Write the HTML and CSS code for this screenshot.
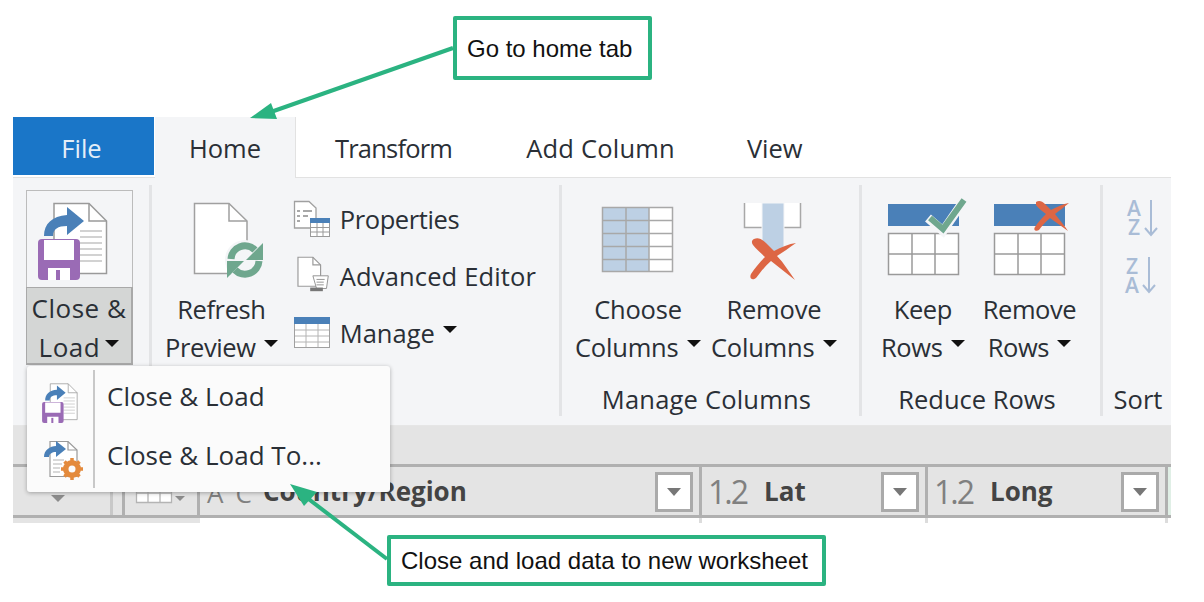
FILE: index.html
```html
<!DOCTYPE html>
<html lang="en">
<head>
<meta charset="UTF-8">
<meta name="viewport" content="width=device-width, initial-scale=1.0">
<link rel="stylesheet" href="styles.css">
<title>Close and Load</title>
</head>
<body>

<svg class="defs" width="0" height="0">
  <symbol id="closeLoad" viewBox="36 200 72 82">
    <path d="M54 203.500H89L106.500 221V273.500H54Z" fill="#fff" stroke="#9a9a9a" stroke-width="1.500"/>
    <path d="M89 203.500V221H106.500" fill="none" stroke="#9a9a9a" stroke-width="1.500"/>
    <path d="M80 231H102M80 237H102M80 243H102M80 249H102M80 255H102M80 261H102" stroke="#c4c4c4" stroke-width="1.500"/>
    <path d="M44 236C44 224 52 216 67 215V207L84 221L67 235V226C58 226 53 229 53 236Z" fill="#4a80b8"/>
    <path d="M42 239H76A4 4 0 0 1 80 243V276A4 4 0 0 1 76 280H42A4 4 0 0 1 38 276V243A4 4 0 0 1 42 239Z" fill="#9a6bb5"/>
    <path d="M44 240H74V260H44ZM48 268H70V280H48Z" fill="#fff"/>
    <path d="M56 270H60V280H56Z" fill="#9a6bb5"/>
  </symbol>
</svg>

<div class="shot">
  <div class="tabs">
    <div class="tab tab-file">File</div>
    <div class="tab tab-active">Home</div>
    <div class="tab tab-transform">Transform</div>
    <div class="tab tab-add">Add Column</div>
    <div class="tab tab-view">View</div>
  </div>

  <div class="ribbon">
    <div class="group group-close">
      <div class="close-btn">
        <div class="close-top">
          <svg width="72" height="82"><use href="#closeLoad"/></svg>
        </div>
        <div class="close-bottom">Close &amp;<br>Load <span class="caret"></span></div>
      </div>
    </div>

    <div class="group group-query">
      <div class="group-body">
        <div class="big-btn">
          <svg class="big-icon" viewBox="165 195 112 96" width="112" height="96">
            <path d="M194.500 203.500H229L247 221V273.500H194.500Z" fill="#fff" stroke="#a0a0a0" stroke-width="1.500"/>
            <path d="M229 203.500V221H247" fill="none" stroke="#a0a0a0" stroke-width="1.500"/>
            <circle cx="245" cy="260" r="20" fill="#f4f5f7"/>
            <path d="M231 259A14 14 0 0 1 255 250" fill="none" stroke="#6fa78e" stroke-width="7"/>
            <path d="M259 261A14 14 0 0 1 235 270" fill="none" stroke="#6fa78e" stroke-width="7"/>
            <path d="M263 243V260H246Z" fill="#6fa78e"/>
            <path d="M227 278V261H244Z" fill="#6fa78e"/>
          </svg>
          <div class="big-label">Refresh<br>Preview <span class="caret"></span></div>
        </div>
        <div class="small-list">
          <div class="small-btn">
            <svg viewBox="292 198 38 40" width="38" height="40">
              <path d="M293.500 200.500H308L315 207V227H293.500Z" fill="#fff" stroke="#a0a0a0" stroke-width="1.300"/>
              <path d="M296 210H299M296 215H299M296 220H299M302 210H311M302 215H307" stroke="#8c8c8c" stroke-width="1.300"/>
              <rect x="309.500" y="217.500" width="19" height="18" fill="#fff" stroke="#9a9a9a"/>
              <rect x="309" y="217" width="20" height="5" fill="#4a80b8"/>
              <path d="M316 222V235M322 222V235M310 226.500H328M310 231H328" stroke="#9a9a9a"/>
            </svg>
            <span class="text-properties">Properties</span>
          </div>
          <div class="small-btn">
            <svg viewBox="292 255 42 42" width="38" height="42" preserveAspectRatio="xMinYMin">
              <path d="M297.500 257.500H314L322.500 266V289.500H297.500Z" fill="#fff" stroke="#9a9a9a" stroke-width="1.300"/>
              <path d="M314 257.500V266H322.500" fill="none" stroke="#9a9a9a" stroke-width="1.300"/>
              <path d="M314 278H331L329 292H318Z" fill="#fff" stroke="#8c8c8c"/>
              <path d="M318 282H327M318 285H326M318 288H326" stroke="#8c8c8c"/>
              <path d="M311 291H325V295H311Z" fill="#777"/>
            </svg>
            <span class="text-editor">Advanced Editor</span>
          </div>
          <div class="small-btn">
            <svg viewBox="292 314 38 34" width="38" height="34">
              <rect x="293.500" y="315.500" width="35" height="30" fill="#fff" stroke="#a0a0a0"/>
              <rect x="293" y="315" width="36" height="7" fill="#4a80b8"/>
              <path d="M305 322V345M317 322V345M294 328H328M294 334H328M294 340H328" stroke="#b4b4b4"/>
            </svg>
            <span>Manage <span class="caret"></span></span>
          </div>
        </div>
      </div>
    </div>

    <div class="group group-columns">
      <div class="group-body">
        <div class="big-btn">
          <svg class="big-icon" viewBox="602 195 72 96" width="72" height="96">
            <rect x="602" y="207" width="71" height="65" fill="#fff"/>
            <rect x="602" y="207" width="47" height="65" fill="#bdd0e4"/>
            <path d="M602.500 207.500H672.500V271.500H602.500V207.500ZM602 220.500H673M602 233.500H673M602 246.500H673M602 259.500H673M626 207V272M649 207V272" fill="none" stroke="#a8a8a8" stroke-width="1.500"/>
          </svg>
          <div class="big-label">Choose<br>Columns <span class="caret"></span></div>
        </div>
        <div class="big-btn">
          <svg class="big-icon" viewBox="740 195 70 96" width="70" height="96">
            <path d="M745.500 203V227.500H801.500V203" fill="#fff" stroke="#a8a8a8" stroke-width="1.500"/>
            <path d="M763 203H785V248L774 252L763 248Z" fill="#bdd0e4" stroke="#f4f5f7"/>
            <path d="M755 239C759 237 763 239 767 243L775 251C782 247 790 244 797 243C790 248 784 252 778 256C785 263 790 272 796 280C788 274 780 267 772 261C766 266 761 273 757 278C753 281 750 278 752 274C756 268 761 262 766 257C762 253 757 249 754 245C752 242 753 240 755 239Z" fill="#dd6644"/>
          </svg>
          <div class="big-label">Remove<br>Columns <span class="caret"></span></div>
        </div>
      </div>
      <div class="group-label">Manage Columns</div>
    </div>

    <div class="group group-rows">
      <div class="group-body">
        <div class="big-btn">
          <svg class="big-icon" viewBox="882 195 80 96" width="80" height="96">
            <rect x="887" y="204" width="71" height="22" fill="#4a80b8"/>
            <path d="M887.500 233.500H957.500V274.500H887.500ZM887 254H958M911 233V275M934 233V275" fill="#fff" stroke="#9a9a9a" stroke-width="1.500"/>
            <path d="M927 218L942 231L964 199" fill="none" stroke="#f4f5f7" stroke-width="9"/>
            <path d="M929 218L942 229L963 200" fill="none" stroke="#6fa78e" stroke-width="6"/>
          </svg>
          <div class="big-label">Keep<br>Rows <span class="caret"></span></div>
        </div>
        <div class="big-btn">
          <svg class="big-icon" viewBox="995 195 71 96" width="71" height="96">
            <rect x="995" y="204" width="71" height="22" fill="#4a80b8"/>
            <path d="M995.500 233.500H1065.500V274.500H995.500ZM995 254H1066M1019 233V275M1042 233V275" fill="#fff" stroke="#9a9a9a" stroke-width="1.500"/>
            <path d="M1037 202C1040 200 1043 201 1046 204L1052 210C1058 207 1064 204 1070 203C1065 207 1060 211 1056 214C1060 219 1065 225 1069 231C1063 227 1057 222 1051 218C1046 222 1042 227 1040 230C1037 232 1034 230 1036 227C1039 222 1043 218 1047 214C1043 211 1039 208 1037 205Z" fill="#dd6644"/>
          </svg>
          <div class="big-label">Remove<br>Rows <span class="caret"></span></div>
        </div>
      </div>
      <div class="group-label">Reduce Rows</div>
    </div>

    <div class="group group-sort">
      <div class="group-body sort-body">
        <svg viewBox="1124 188 36 110" width="36" height="110">
          <text x="1134" y="216" class="sort-letter">A</text>
          <text x="1134" y="235" class="sort-letter">Z</text>
          <path d="M1151 200V235M1145 228L1151 235L1157 228" fill="none" stroke="#a9bcd6" stroke-width="2"/>
          <text x="1132" y="274" class="sort-letter">Z</text>
          <text x="1132" y="293" class="sort-letter">A</text>
          <path d="M1149 257V292M1143 285L1149 292L1155 285" fill="none" stroke="#a9bcd6" stroke-width="2"/>
        </svg>
      </div>
      <div class="group-label">Sort</div>
    </div>
  </div>

  <div class="band"></div>

  <div class="table-head">
    <div class="col col-num"><span class="num-caret"></span></div>
    <div class="col col-spacer"></div>
    <div class="col col-table">
      <svg viewBox="139 480 50 28" width="50" height="28">
        <path d="M139.500 480.500H174.500V505.500H139.500ZM139 496H175M151 480V506M163 480V506" fill="#fff" stroke="#b4b4b4" stroke-width="1.300"/>
        <path d="M178 499H188L183 504Z" fill="#8c8c8c"/>
      </svg>
    </div>
    <div class="col col-country">
      <span class="type-ac">A<i>C</i></span>
      <span class="col-name">Country/Region</span>
      <span class="filter"></span>
    </div>
    <div class="col col-lat">
      <span class="type-num">1.2</span>
      <span class="col-name">Lat</span>
      <span class="filter"></span>
    </div>
    <div class="col col-long">
      <span class="type-num">1.2</span>
      <span class="col-name">Long</span>
      <span class="filter"></span>
    </div>
    <div class="col-end"></div>
  </div>
  <div class="table-foot">
    <div class="foot-left"></div>
    <div class="foot-tick tick-country"></div>
    <div class="foot-tick tick-lat"></div>
    <div class="foot-tick tick-long"></div>
  </div>

  <div class="menu">
    <div class="menu-icons">
      <svg width="37" height="42"><use href="#closeLoad"/></svg>
      <svg viewBox="41 438 42 44" width="42" height="44">
        <path d="M50 441.500H68L77 450V476.500H50Z" fill="#fff" stroke="#9a9a9a" stroke-width="1.200"/>
        <path d="M68 441.500V450H77" fill="none" stroke="#9a9a9a" stroke-width="1.200"/>
        <path d="M53 460H64M53 464H62M53 468H60M53 472H60" stroke="#b4b4b4" stroke-width="1.200"/>
        <path d="M44 457C44 450 50 446 56 446V441L66 449L56 457V452C52 452 49 454 49 457Z" fill="#4a80b8"/>
        <circle cx="72" cy="469" r="6.500" fill="none" stroke="#e48a3c" stroke-width="5"/>
        <path d="M72 458V480M61 469H83M64.500 461.500L79.500 476.500M79.500 461.500L64.500 476.500" stroke="#e48a3c" stroke-width="3.500"/>
        <circle cx="72" cy="469" r="3.500" fill="#fbfbfb"/>
      </svg>
    </div>
    <div class="menu-items">
      <div class="menu-item">Close &amp; Load</div>
      <div class="menu-item">Close &amp; Load To...</div>
    </div>
  </div>
</div>

<div class="callout callout-home">Go to home tab</div>
<div class="callout callout-load">Close and load data to new worksheet</div>

<svg class="arrows" width="1204" height="602">
  <path d="M453 48L268 113" stroke="#2bb381" stroke-width="4"/>
  <path d="M250 118L271 103L277 119Z" fill="#2bb381"/>
  <path d="M387 559L302 494" stroke="#2bb381" stroke-width="4"/>
  <path d="M290 484L317 492L304 506Z" fill="#2bb381"/>
</svg>

</body>
</html>
```
FILE: styles.css
```css
body {
  margin: 0;
  height: 602px;
  overflow: hidden;
  position: relative;
  background: white;
  font-family: "Open Sans", "Noto Sans", sans-serif;
  font-size: 25.5px;
  color: #2a2f36;
}
svg {
  overflow: visible;
}
.defs {
  position: absolute;
}
.shot {
  position: relative;
  width: 1158px;
  margin: 117px 0 0 13px;
}

/* tabs */
.tabs {
  display: flex;
  height: 60px;
  border-bottom: 1px solid #e2e2e2;
}
.tab {
  line-height: 62px;
  text-align: center;
  white-space: nowrap;
}
.tab-file {
  width: 137px;
  height: 58px;
  padding-right: 4px;
  background: #1a76c8;
  color: #e4eef8;
}
.tab-active {
  width: 141px;
  height: 61px;
  margin-left: 1px;
  background: #f4f5f7;
  border-right: 1px solid #e2e2e2;
  box-sizing: border-box;
}
.tab-transform {
  margin-left: 39px;
  letter-spacing: -0.8px;
}
.tab-add {
  margin-left: 74px;
  letter-spacing: 0.2px;
}
.tab-view {
  margin-left: 72px;
}

/* ribbon */
.ribbon {
  display: flex;
  height: 248px;
  background: #f4f5f7;
  box-sizing: border-box;
  padding: 7px 0 9px;
  border-bottom: 1px solid #e6e6e6;
}
.group {
  display: flex;
  flex-direction: column;
  box-sizing: border-box;
  border-right: 3px solid #e3e4e6;
}
.group-body {
  flex: 1;
  display: flex;
}
.group-label {
  height: 36px;
  line-height: 38px;
  text-align: center;
}
.group-close {
  width: 139px;
  padding-left: 13px;
}
.group-query {
  width: 410px;
}
.group-query .group-body {
  padding-left: 13px;
  gap: 15px;
}
.group-query .big-label {
  letter-spacing: -0.4px;
}
.group-columns {
  width: 300px;
}
.group-columns .group-body {
  padding-left: 13px;
  gap: 10px;
}
.group-columns .big-label {
  letter-spacing: -0.2px;
}
.group-columns .group-label {
  padding-right: 8px;
  letter-spacing: 0.2px;
}
.group-rows {
  width: 241px;
}
.group-rows .group-body {
  padding-left: 19px;
  gap: 18px;
}
.group-rows .big-label {
  letter-spacing: -0.4px;
}
.group-rows .group-label {
  padding-right: 8px;
}
.group-sort {
  flex: 1;
  border-right: none;
}
.group-sort .group-label {
  padding-left: 2px;
}
.sort-body {
  padding: 3px 0 0 21px;
}
.sort-letter {
  font-family: "Open Sans", sans-serif;
  font-size: 21px;
  font-weight: 600;
  fill: #a9bcd6;
  text-anchor: middle;
}

/* close & load button */
.close-btn {
  width: 107px;
  margin-top: 5px;
  text-align: center;
  line-height: 39px;
  font-size: 26px;
}
.close-top {
  height: 97px;
  box-sizing: border-box;
  border: 1px solid #bcbcbc;
  border-bottom: none;
  padding-top: 9px;
  padding-left: 9px;
  text-align: left;
}
.close-bottom {
  height: 78px;
  box-sizing: border-box;
  padding-top: 1px;
  background: #d4d6d5;
  border: 2px solid #a9a9a9;
  border-width: 1px 2px 2px 1px;
  letter-spacing: 0.5px;
}
.close-bottom .caret {
  margin-left: -2px;
}

/* big buttons */
.big-btn {
  display: flex;
  flex-direction: column;
  align-items: center;
  margin-top: 10px;
}
.big-icon {
  display: block;
}
.big-label {
  margin-top: -1px;
  text-align: center;
  line-height: 38px;
  white-space: nowrap;
}
.caret {
  display: inline-block;
  width: 0;
  height: 0;
  margin-left: 2px;
  vertical-align: 10px;
  border-left: 7px solid transparent;
  border-right: 7px solid transparent;
  border-top: 7px solid #111;
}

/* small buttons */
.small-list {
  display: flex;
  flex-direction: column;
  margin-top: 5px;
}
.small-btn {
  display: flex;
  align-items: center;
  gap: 9px;
  height: 57px;
  white-space: nowrap;
}
.small-btn svg {
  flex: none;
}
.text-properties {
  letter-spacing: -0.4px;
}
.text-editor {
  letter-spacing: 0.15px;
}

/* table */
.band {
  height: 38px;
  background: #e4e4e4;
}
.table-head {
  display: flex;
  height: 54px;
  background: #e4e4e4;
  box-sizing: border-box;
  border-top: 3px solid #b0b0b0;
  border-bottom: 3px solid #b0b0b0;
}
.col {
  display: flex;
  align-items: center;
  position: relative;
  box-sizing: border-box;
  border-right: 3px solid #b0b0b0;
}
.col-num {
  width: 100px;
  border-right: 3px solid #c8c8c8;
  justify-content: center;
}
.num-caret {
  width: 0;
  height: 0;
  margin: 14px 0 0 -8px;
  border-left: 7px solid transparent;
  border-right: 7px solid transparent;
  border-top: 7px solid #8c8c8c;
}
.col-spacer {
  width: 12px;
  border-right: 3px solid #b0b0b0;
}
.col-table {
  width: 75px;
  padding-left: 11px;
}
.col-country {
  width: 502px;
  padding-left: 63px;
}
.col-lat {
  width: 226px;
  padding-left: 6px;
}
.col-long {
  width: 240px;
  padding-left: 6px;
}
.col-end {
  flex: 1;
  background: #e0efe6;
}
.col-name {
  font-weight: 700;
  font-size: 26px;
  color: #444;
}
.type-num {
  font-size: 32px;
  letter-spacing: -2px;
  color: #808080;
  margin-right: 17px;
}
.type-ac {
  position: absolute;
  left: 7px;
  top: 8px;
  font-size: 26px;
  color: #808080;
}
.type-ac i {
  font-style: normal;
  margin-left: 12px;
}
.filter {
  position: absolute;
  right: 6px;
  top: 5px;
  width: 38px;
  height: 40px;
  box-sizing: border-box;
  background: white;
  border: 3px solid #aaa;
}
.filter::after {
  content: "";
  position: absolute;
  left: 9px;
  top: 13px;
  border-left: 7px solid transparent;
  border-right: 7px solid transparent;
  border-top: 8px solid #777;
}
.table-foot {
  display: flex;
  height: 5px;
}
.foot-left {
  width: 187px;
  background: #e4e4e4;
}
.foot-tick {
  width: 3px;
  background: #dcdcdc;
}
.tick-country {
  margin-left: 499px;
}
.tick-lat {
  margin-left: 223px;
}
.tick-long {
  margin-left: 237px;
}

/* dropdown */
.menu {
  position: absolute;
  left: 14px;
  top: 249px;
  width: 363px;
  height: 126px;
  display: flex;
  background: #fbfbfb;
  border-radius: 3px;
  box-shadow: 0 1px 4px rgba(0, 0, 0, 0.3);
}
.menu-icons {
  width: 68px;
  height: 118px;
  margin-top: 4px;
  box-sizing: border-box;
  border-right: 2px solid #c8c8c8;
  display: flex;
  flex-direction: column;
  align-items: flex-start;
  gap: 14px;
  padding: 12px 0 0 14px;
}
.menu-items {
  padding-left: 12px;
  font-size: 26px;
}
.menu-item {
  height: 59px;
  line-height: 60px;
  white-space: nowrap;
}

/* annotations */
.callout {
  position: absolute;
  box-sizing: border-box;
  background: white;
  border: 4px solid #2bb381;
  border-radius: 2px;
  font-family: "Liberation Sans", Arial, sans-serif;
  font-size: 24px;
  color: #111;
  white-space: nowrap;
}
.callout-home {
  left: 453px;
  top: 16px;
  width: 199px;
  height: 64px;
  padding-left: 10px;
  line-height: 58px;
}
.callout-load {
  left: 387px;
  top: 535px;
  width: 439px;
  height: 51px;
  padding-left: 10px;
  line-height: 44px;
}
.arrows {
  position: absolute;
  left: 0;
  top: 0;
  pointer-events: none;
}
```
